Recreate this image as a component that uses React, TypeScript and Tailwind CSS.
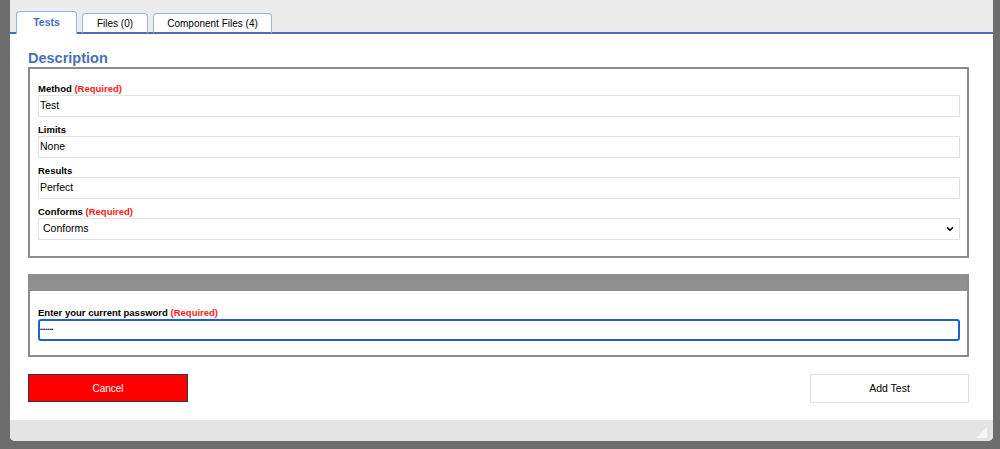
import { ChevronDown } from 'lucide-react';

const font = { fontFamily: '"Liberation Sans", Arial, Helvetica, sans-serif' };

function Label({ text, required }: { text: string; required?: boolean }) {
  return (
    <div className="h-[12px] leading-[12px] text-[9.5px] font-bold text-black">
      {text}
      {required && <span className="text-[#ff1a1a]"> (Required)</span>}
    </div>
  );
}

function TextField({ label, value, required }: { label: string; value: string; required?: boolean }) {
  return (
    <div className="flex flex-col">
      <Label text={label} required={required} />
      <div className="h-[22px] border border-[#e2e2e2] px-[1px] flex items-center text-[10.5px] text-black">{value}</div>
    </div>
  );
}

export default function App() {
  const tabs = [
    { name: 'Tests', w: 'w-[61px]', active: true },
    { name: 'Files (0)', w: 'w-[66px]', active: false },
    { name: 'Component Files (4)', w: 'w-[119px]', active: false },
  ];

  return (
    <div className="w-full h-[449px] bg-[#6d6d6d] pl-[10px] pr-[7px] pb-[8px]" style={font}>
      <div className="h-full bg-white rounded-b-[5px] overflow-hidden flex flex-col">
        <div className="h-[34px] bg-[#ececec] border-b-2 border-[#4a6db3] flex items-end pl-[6px] gap-[5px]">
          {tabs.map(t => (
            <div
              key={t.name}
              className={`${t.w} h-[21px] -mb-[2px] bg-white border border-b-0 border-[#9db1d8] rounded-t-[4px] flex items-center justify-center ${t.active ? 'h-[23px] text-[10.5px] font-bold text-[#4a6db3]' : 'text-[10px] text-black border-b-2 border-b-[#4a6db3]'}`}
            >
              {t.name}
            </div>
          ))}
        </div>

        <div className="flex-1 pl-[18px] pr-[24px]">
          <div className="pt-[15px] h-[33px] leading-[18px] text-[14.5px] font-bold text-[#4a6fb8]">Description</div>

          <div className="border-2 border-[#8c8c8c] pl-[8px] pr-[7px] pt-[14px] pb-[16px] flex flex-col gap-[7px]">
            <TextField label="Method" value="Test" required />
            <TextField label="Limits" value="None" />
            <TextField label="Results" value="Perfect" />
            <div className="flex flex-col">
              <Label text="Conforms" required />
              <div className="h-[22px] border border-[#e2e2e2] pl-[4px] pr-[4px] flex items-center justify-between text-[10.5px] text-black">
                <span>Conforms</span>
                <ChevronDown className="w-[10px] h-[10px]" strokeWidth={4} />
              </div>
            </div>
          </div>

          <div className="mt-[16px] border-2 border-t-0 border-[#8c8c8c]">
            <div className="h-[17px] bg-[#8f8f8f]" />
            <div className="pl-[8px] pr-[7px] pt-[16px] pb-[14px]">
              <Label text="Enter your current password" required />
              <div className="h-[22px] border-2 border-[#1f5fd0] rounded-[3px] flex items-center text-[5.5px] text-black leading-none">
                •••••••
              </div>
            </div>
          </div>

          <div className="mt-[17px] flex justify-between">
            <button className="w-[160px] h-[28px] bg-[#ff0000] border border-[#3a3a3a] text-white text-[10px]">Cancel</button>
            <button className="w-[159px] h-[29px] bg-white border border-[#e2e2e2] text-black text-[10.5px]">Add Test</button>
          </div>
        </div>

        <div className="h-[21px] bg-[#e4e4e4] flex justify-end items-end pr-[6px] pb-[3px]">
          <svg width="11" height="11" viewBox="0 0 11 11">
            <polygon points="11,0 11,11 0,11" fill="#f7f7f7" />
          </svg>
        </div>
      </div>
    </div>
  );
}
